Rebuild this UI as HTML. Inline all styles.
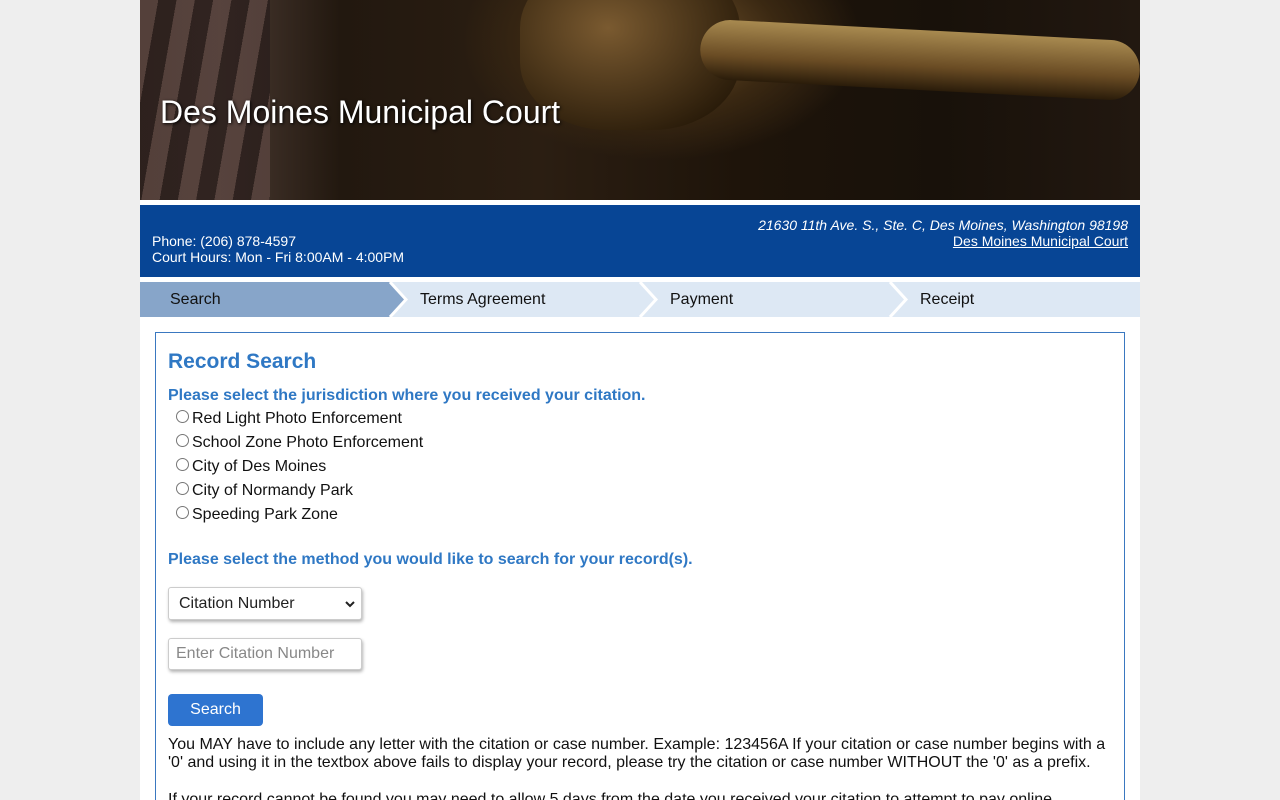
<!DOCTYPE html>
<html><head><meta charset="utf-8"><style>
html,body{margin:0;height:800px;overflow:hidden;}
body{background:#eeeeee;font-family:"Liberation Sans",Arial,sans-serif;}
#wrap{position:absolute;left:140px;top:0;width:1000px;height:800px;background:#fff;overflow:hidden}
#hero{position:absolute;left:0;top:0;width:1000px;height:200px;overflow:hidden;
background:radial-gradient(ellipse 200px 120px at 520px 40px,#7a5a30 0%,#3a2812 60%,transparent 100%),
linear-gradient(90deg,#3a2c22 0%,#4a3a32 8%,#22180f 20%,#2b1e12 40%,#1e140a 60%,#18110a 80%,#221810 100%);}
#hero .handle{position:absolute;left:560px;top:30px;width:440px;height:60px;border-radius:30px;background:linear-gradient(180deg,#a88a50,#6a4c24 60%,#2a1c0a);transform:rotate(3deg);}
#hero .head{position:absolute;left:380px;top:-40px;width:220px;height:170px;border-radius:40%;background:radial-gradient(ellipse at 40% 40%,#7a5a30,#2a1c0a 80%);}
#hero .flag{position:absolute;left:0;top:0;width:130px;height:200px;background:repeating-linear-gradient(100deg,#5a4540 0 18px,#2a1e1c 18px 36px);opacity:.8}
#hero h1{position:absolute;left:20px;top:94px;margin:0;font-weight:normal;font-size:32px;color:#fff;text-shadow:1px 1px 3px #000;}
#info{position:absolute;left:0;top:205px;width:1000px;height:72px;background:#074595;color:#fff;font-size:14px;}
#info .l{position:absolute;left:12px;top:28px;line-height:16px;}
#info .r{position:absolute;right:12px;top:12px;line-height:16px;text-align:right;}
#info .r i{font-style:italic}
#info a{color:#fff;text-decoration:underline}
#nav{position:absolute;left:0;top:282px;width:1000px;height:35px;background:#dde8f4;}
#nav div{position:absolute;top:0;height:35px;line-height:35px;font-size:16px;color:#111;}
#box{position:absolute;left:15px;top:332px;width:968px;height:480px;border:1px solid #3a78c0;}
h2{position:absolute;left:12px;top:17px;margin:0;font-size:21px;color:#2f78c4;font-family:"Liberation Sans",sans-serif;font-weight:bold;}
.q{position:absolute;left:12px;font-size:16px;font-weight:bold;color:#2f78c4;}
.rad{position:absolute;left:20px;font-size:16px;color:#111;}
.rad span{display:inline-block;width:11px;height:11px;border:1px solid #777;border-radius:50%;margin-right:3px;vertical-align:0px;background:#fff}
.sel{position:absolute;left:12px;top:254px;width:194px;height:33px;border:1px solid #ccc;border-radius:3px;box-shadow:1px 2px 3px rgba(0,0,0,.3);font-size:16px;color:#222;line-height:31px;box-sizing:border-box;padding-left:10px;background:#fff}
.inp{position:absolute;left:12px;top:305px;width:194px;height:32px;border:1px solid #ccc;border-radius:3px;box-shadow:1px 2px 3px rgba(0,0,0,.3);font-size:16px;color:#888;line-height:30px;box-sizing:border-box;padding-left:7px;background:#fff}
.btn{position:absolute;left:12px;top:361px;width:95px;height:32px;background:#2e74d0;border-radius:4px;color:#fff;font-size:16px;text-align:center;line-height:32px}
.p{position:absolute;left:12px;width:950px;font-size:16px;color:#111;line-height:18px}
</style></head><body>
<div id="wrap">
<div id="hero"><div class="flag"></div><div class="head"></div><div class="handle"></div><h1>Des Moines Municipal Court</h1></div>
<div id="info"><div class="l">Phone: (206) 878-4597<br>Court Hours: Mon - Fri 8:00AM - 4:00PM</div>
<div class="r"><i>21630 11th Ave. S., Ste. C, Des Moines, Washington 98198</i><br><a>Des Moines Municipal Court</a></div></div>
<div id="nav">
<svg width="1000" height="35" style="position:absolute;left:0;top:0">
<polygon points="0,0 250,0 266,17.5 250,35 0,35" fill="#87a5c9"/>
<polyline points="250,0 266,17.5 250,35" fill="none" stroke="#fff" stroke-width="3"/>
<polyline points="500,0 516,17.5 500,35" fill="none" stroke="#fff" stroke-width="3"/>
<polyline points="750,0 766,17.5 750,35" fill="none" stroke="#fff" stroke-width="3"/>
</svg>
<div style="left:30px">Search</div><div style="left:280px">Terms Agreement</div><div style="left:530px">Payment</div><div style="left:780px">Receipt</div></div>
<div id="box">
<h2>Record Search</h2>
<div class="q" style="top:54px">Please select the jurisdiction where you received your citation.</div>
<div class="rad" style="top:77px"><span></span>Red Light Photo Enforcement</div>
<div class="rad" style="top:101px"><span></span>School Zone Photo Enforcement</div>
<div class="rad" style="top:125px"><span></span>City of Des Moines</div>
<div class="rad" style="top:149px"><span></span>City of Normandy Park</div>
<div class="rad" style="top:173px"><span></span>Speeding Park Zone</div>
<div class="q" style="top:218px">Please select the method you would like to search for your record(s).</div>
<div class="sel">Citation Number<svg width="10" height="8" style="position:absolute;right:6px;top:12px"><polyline points="1,2 5,6 9,2" fill="none" stroke="#222" stroke-width="2"/></svg></div>
<div class="inp">Enter Citation Number</div>
<div class="btn">Search</div>
<div class="p" style="top:403px">You MAY have to include any letter with the citation or case number. Example: 123456A If your citation or case number begins with a '0' and using it in the textbox above fails to display your record, please try the citation or case number WITHOUT the '0' as a prefix.</div>
<div class="p" style="top:458px">If your record cannot be found you may need to allow 5 days from the date you received your citation to attempt to pay online.</div>
</div>
</div>
</body></html>
